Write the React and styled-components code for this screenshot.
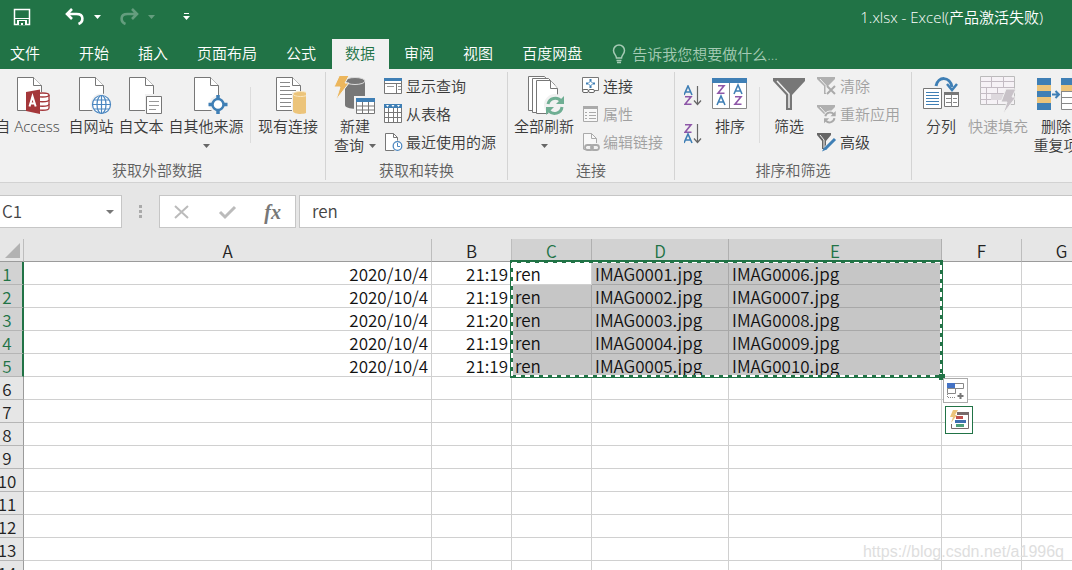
import React from "react";
import styled, { createGlobalStyle, css } from "styled-components";

const GREEN = "#217346";
const UI_FONT = `"Open Sans", "Noto Sans CJK SC", sans-serif`;
const GRID_FONT = `"Noto Sans CJK SC", sans-serif`;

const GlobalStyle = createGlobalStyle`
  * { box-sizing: border-box; }
  body { margin: 0; background: #fff; font-family: ${UI_FONT}; font-size: 15px; font-weight: 350; }
  button, input { font: inherit; color: inherit; margin: 0; padding: 0; border: 0; background: none; border-radius: 0; }
`;

const Window = styled.div`
  display: flex;
  flex-direction: column;
  height: 100vh;
  overflow: hidden;
  background: #fff;
`;

/* ---------- title bar and tabs ---------- */
const TitleBar = styled.header`
  display: flex;
  align-items: center;
  justify-content: space-between;
  height: 38px;
  flex: none;
  padding: 0 29px 4px 13px;
  background: ${GREEN};
  color: #fff;
`;
const QuickAccess = styled.div`
  display: flex;
  align-items: center;
`;
const QuickButton = styled.button`
  display: flex;
  align-items: center;
  height: 20px;
  margin-right: ${(p) => p.$after || 0}px;
  opacity: ${(p) => (p.disabled ? 0.3 : 1)};
`;
const DocTitle = styled.h1`
  margin: 0;
  font-size: 15px;
  font-weight: 350;
  line-height: 20px;
  white-space: nowrap;
`;
const TabBar = styled.nav`
  display: flex;
  align-items: stretch;
  height: 31px;
  flex: none;
  padding-top: 1px;
  background: ${GREEN};
  color: #fff;
`;
const Tab = styled.button`
  flex: none;
  padding: 0 ${(p) => (p.$file ? 24 : 14)}px 3px ${(p) => (p.$file ? 10 : 15)}px;
  line-height: 20px;
  white-space: nowrap;
  ${(p) => p.$active && css`background: #f1f1f1; color: ${GREEN}; margin-left: 2px; padding-left: 13px;`}
`;
const TellMe = styled.label`
  display: flex;
  align-items: center;
  gap: 6px;
  flex: 1;
  margin-left: 16px;
  color: #a6cbb5;
  input { flex: 1; min-width: 0; height: 24px; }
  input::placeholder { color: #a6cbb5; opacity: 1; }
`;

/* ---------- ribbon ---------- */
const Ribbon = styled.section`
  display: flex;
  flex: none;
  height: 114px;
  margin-left: -11px;
  padding-top: 3px;
  background: #f1f1f1;
  border-bottom: 1px solid #d2d2d2;
  color: #3a3a3a;
`;
const Group = styled.div`
  display: flex;
  flex-direction: column;
  flex: none;
  width: ${(p) => p.$w}px;
  height: 108px;
  border-right: 1px solid #d4d4d4;
`;
const GroupBody = styled.div`
  display: flex;
  flex: 1;
  padding-left: ${(p) => p.$start || 0}px;
`;
const GroupLabel = styled.div`
  height: 20px;
  line-height: 20px;
  text-align: center;
  color: #606060;
`;
const BigButton = styled.button`
  display: flex;
  flex-direction: column;
  align-items: center;
  flex: none;
  width: ${(p) => p.$w}px;
  padding-top: 4px;
  line-height: 19px;
  white-space: nowrap;
  color: ${(p) => (p.disabled ? "#a0a0a0" : "#3a3a3a")};
  > svg { flex: none; margin-bottom: 1px; }
`;
const SecondLine = styled.span`
  display: flex;
  align-items: center;
  justify-content: center;
  gap: 5px;
  height: 19px;
`;
const Divider = styled.span`
  flex: none;
  width: 1px;
  height: 56px;
  margin: 15px ${(p) => p.$gap}px 0;
  background: #dcdcdc;
`;
const Stack = styled.div`
  display: flex;
  flex-direction: column;
  padding: 0 0 0 ${(p) => p.$gap || 0}px;
`;
const SmallButton = styled.button`
  display: flex;
  align-items: center;
  gap: 3px;
  height: 28px;
  line-height: 20px;
  white-space: nowrap;
  color: ${(p) => (p.disabled ? "#a0a0a0" : "#3a3a3a")};
`;
const SortStack = styled.div`
  display: flex;
  flex-direction: column;
  gap: 16px;
  padding: 13px 0 0 9px;
`;
const SortButton = styled.button`
  display: block;
  width: 18px;
  height: 22px;
`;

/* ---------- formula bar ---------- */
const FormulaRow = styled.div`
  display: flex;
  flex: none;
  height: 56px;
  padding-top: 12px;
  background: #e6e6e6;
  color: #444;
  font-family: ${GRID_FONT};
  font-size: 17px;
`;
const Box = styled.div`
  display: flex;
  align-items: center;
  height: 33px;
  background: #fff;
  border: 1px solid #c6c6c6;
  input { height: 31px; padding-bottom: 3px; }
`;
const NameBox = styled(Box)`
  width: 122px;
  border-left: 0;
  input { width: 100px; padding-left: 2px; }
`;
const Grip = styled.span`
  width: 37px;
  height: 33px;
  display: flex;
  align-items: center;
  justify-content: center;
`;
const Tools = styled(Box)`
  width: 137px;
  margin-right: 3px;
  justify-content: space-between;
  padding: 0 14px 0 13px;
`;
const FormulaInput = styled(Box)`
  flex: 1;
  border-right: 0;
  input { flex: 1; min-width: 0; padding-left: 12px; }
`;
const IconButton = styled.button`
  display: flex;
`;
const FunctionMark = styled.i`
  font: italic bold 20px/24px "Liberation Serif", serif;
  color: #777;
`;

/* ---------- sheet ---------- */
const SheetArea = styled.main`
  position: relative;
  flex: 1;
  overflow: hidden;
  font-family: ${GRID_FONT};
  font-size: 17px;
  color: #111;
`;
const Sheet = styled.table`
  width: 100%;
  min-width: 1102px;
  table-layout: fixed;
  border-collapse: separate;
  border-spacing: 0;
`;
const HeadCell = styled.th`
  height: 23px;
  padding: 2px 0 0;
  font-weight: 350;
  line-height: 20px;
  background: ${(p) => (p.$on ? "#d2d2d2" : "#e6e6e6")};
  color: ${(p) => (p.$on ? GREEN : "#222")};
  border-right: 1px solid ${(p) => (p.$on ? "#b0b0b0" : "#bdbdbd")};
  border-bottom: 1px solid #9b9b9b;
`;
const Corner = styled(HeadCell)`
  padding: 0 3px 3px 0;
  vertical-align: bottom;
  svg { display: block; margin-left: auto; }
`;
const RowHead = styled.th`
  height: 23px;
  padding: 2px 0 0;
  font-weight: 350;
  line-height: 20px;
  background: ${(p) => (p.$on ? "#d2d2d2" : "#e6e6e6")};
  color: ${(p) => (p.$on ? GREEN : "#222")};
  border-right: ${(p) => (p.$on ? `2px solid ${GREEN}` : "1px solid #9b9b9b")};
  border-bottom: 1px solid #b5b5b5;
  span { display: flex; justify-content: center; width: 14px; }
`;
const Cell = styled.td`
  height: 23px;
  padding: 2px 3px 0 3px;
  line-height: 20px;
  white-space: nowrap;
  text-align: ${(p) => (p.$right ? "right" : "left")};
  background: ${(p) => (p.$sel ? "#c6c6c6" : "#fff")};
  border-right: 1px solid ${(p) => (p.$sel ? "#a8a8a8" : "#d0d0d0")};
  border-bottom: 1px solid ${(p) => (p.$sel ? "#a8a8a8" : "#d0d0d0")};
`;
const Marquee = styled.svg`
  position: absolute;
  left: 510px;
  top: 21px;
  pointer-events: none;
`;
const FloatButton = styled.button`
  position: absolute;
  left: ${(p) => p.$x}px;
  top: ${(p) => p.$y}px;
  width: ${(p) => p.$size}px;
  height: ${(p) => p.$size}px;
  display: flex;
  align-items: center;
  justify-content: center;
  background: #fff;
  border: 1px solid ${(p) => p.$edge};
`;
const Watermark = styled.span`
  position: absolute;
  right: 8px;
  bottom: 8px;
  font: 16px/20px "Liberation Sans", sans-serif;
  color: #dedede;
`;

/* ---------- drawings ---------- */
const Caret = ({ color = "#666" }) => (
  <svg width="7" height="4" viewBox="0 0 7 4"><path d="M0 0h7L3.500 4z" fill={color} /></svg>
);
const Svg = ({ w = 36, h = 40, children }) => (
  <svg width={w} height={h} viewBox={`0 0 ${w} ${h}`} fill="none">{children}</svg>
);
const Page = ({ x = 2 }) => (
  <g stroke="#777" fill="#fff">
    <path d={`M${x + 0.5} 1.5h16l8 8v25h-24z`} />
    <path d={`M${x + 16.5} 1.5v8h8`} />
  </g>
);
const AccessIcon = () => (
  <Svg w={44}>
    <g transform="translate(9 0)">
      <Page x={2} />
      <path d="M20 16h15v21H20z" fill="#f1f1f1" />
      <g stroke="#a4373a" strokeWidth="1.3" fill="#fff">
        <path d="M21 19v13c0 3 13 3 13 0V19" /><ellipse cx="27.500" cy="19" rx="6.500" ry="2" />
        <path d="M21 23.500c0 3 13 3 13 0M21 28c0 3 13 3 13 0" />
      </g>
      <path d="M11 16l14-2.500v24.500L11 35z" fill="#a4373a" />
      <path d="M14.500 30.500l3-10 3.200 10M15.500 27.500h4.200" stroke="#fff" strokeWidth="2" />
    </g>
  </Svg>
);
const WebIcon = () => (
  <Svg w={44}>
    <g transform="translate(5 0)">
      <Page x={5} />
      <circle cx="27.500" cy="28.500" r="11" fill="#f1f1f1" />
      <g stroke="#4a86c0" strokeWidth="1.2" fill="#fff">
        <circle cx="27.500" cy="28.500" r="9" /><ellipse cx="27.500" cy="28.500" rx="4.500" ry="9" />
        <path d="M27.500 19.500v18M18.500 28.500h18M20 24h15M20 33h15" />
      </g>
    </g>
  </Svg>
);
const TextIcon = () => (
  <Svg w={44}>
    <g transform="translate(5 0)">
      <Page x={5} />
      <path d="M21 18h19v20H21z" fill="#f1f1f1" />
      <path d="M22.500 20.500h15v17h-15z" fill="#fff" stroke="#777" />
      <path d="M25 25.500h10M25 29.500h10M25 33.500h7" stroke="#999" />
    </g>
  </Svg>
);
const OtherIcon = () => (
  <Svg w={44}>
    <g transform="translate(3 0)">
      <Page x={7} />
      <circle cx="31" cy="28.500" r="9" fill="#f1f1f1" />
      <circle cx="31" cy="28.500" r="5.500" fill="#fff" stroke="#3f7fb5" strokeWidth="2.500" />
      <path d="M31 19v4M31 34v4M21.500 28.500h4M36.500 28.500h4" stroke="#3f7fb5" strokeWidth="3.500" />
    </g>
  </Svg>
);
const ExistingIcon = () => (
  <Svg>
    <g transform="translate(3 0)">
      <Page x={3} />
      <path d="M7 6.500h10M7 10.500h10M7 14.500h16M7 18.500h13M7 22.500h13M7 26.500h11M7 30.500h11" stroke="#888" />
      <path d="M19 16h17v23H19z" fill="#f1f1f1" />
      <path d="M20 18v17c0 4 15 4 15 0V18" fill="#ecc47a" />
      <ellipse cx="27.500" cy="18" rx="7.500" ry="2.500" fill="#ecc47a" stroke="#fbe7c0" />
    </g>
  </Svg>
);
const NewQueryIcon = () => (
  <Svg w={42}>
    <path d="M11 5v24c0 5 20 5 20 0V5" fill="#777" />
    <ellipse cx="21" cy="5" rx="10" ry="3.500" fill="#777" stroke="#ddd" />
    <path d="M6-2h10l-5 9h4L2 24l4-13H0z" fill="#ecb65c" stroke="#f1f1f1" />
    <path d="M20 20h22v20H20z" fill="#f1f1f1" />
    <path d="M22.500 22.500h18v15h-18z" fill="#fff" stroke="#777" />
    <path d="M22 22h19v4H22z" fill="#3f7fb5" />
    <path d="M22 30h19M22 34h19M28.500 26v12M34.500 26v12" stroke="#777" />
  </Svg>
);
const ShowQueryIcon = () => (
  <Svg w={19} h={18}>
    <path d="M.500 1.500h17v15H.500z" fill="#fff" stroke="#777" />
    <path d="M0 1h18v3H0z" fill="#3f7fb5" />
    <path d="M0 6.500h18M12.500 6v10" stroke="#777" /><path d="M14 9.500h3M14 12.500h3M3 9.500h7" stroke="#999" />
  </Svg>
);
const TableIcon = () => (
  <Svg w={19} h={20}>
    <path d="M.500 1.500h17v17H.500z" fill="#fff" stroke="#777" />
    <path d="M0 0h18v4H0z" fill="#3f7fb5" />
    <path d="M2 1h3L3.500 3zM7.500 1h3L9 3zM13 1h3l-1.500 2z" fill="#fff" />
    <path d="M0 8.500h18M0 13.500h18M4.500 4v15M9.500 4v15M13.500 4v15" stroke="#777" />
  </Svg>
);
const RecentIcon = () => (
  <Svg w={19} h={20}>
    <path d="M1.500 1.500h8l4 4v13h-12z" fill="#fff" stroke="#777" /><path d="M9.500 1.500v4h4" stroke="#777" />
    <circle cx="13.500" cy="14" r="5.500" fill="#f1f1f1" />
    <circle cx="13.500" cy="14" r="4.300" fill="#fff" stroke="#4a86c0" strokeWidth="1.200" /><path d="M13.500 11v3.500h2.500" stroke="#4a86c0" />
  </Svg>
);
const RefreshArrows = ({ color, s = 1, x = 0, y = 0 }) => (
  <g transform={`translate(${x} ${y}) scale(${s})`} stroke={color} strokeWidth="3">
    <path d="M2 8a7.500 7.500 0 0 1 13-3M16 11a7.500 7.500 0 0 1-13 4" />
    <path d="M18 0v8h-8zM0 19v-8h8z" fill={color} stroke="none" />
  </g>
);
const RefreshAllIcon = () => (
  <Svg w={42}>
    <g stroke="#777" fill="#fff">
      <path d="M5.500.500h16l5 6v28h-21z" /><path d="M9.500 2.500h16l6 6v28h-22z" />
      <path d="M13.500 4.500h14l7 8v25h-21z" /><path d="M27.500 4.500v8h7" />
    </g>
    <circle cx="32" cy="29" r="11" fill="#f1f1f1" />
    <RefreshArrows color="#6fae93" x={23} y={20} />
  </Svg>
);
const ConnectIcon = () => (
  <Svg w={19} h={20}>
    <path d="M1.500 1.500h16v13h-16z" fill="#fff" stroke="#777" />
    <path d="M9.500 3v2M9.500 10v2M5 7.500h2M12 7.500h2" stroke="#3f7fb5" strokeWidth="2" /><path d="M9.500 5l2.500 2.500L9.500 10 7 7.500z" stroke="#3f7fb5" />
    <rect x="1.500" y="13.500" width="6" height="3" rx="1.500" fill="#fff" stroke="#666" /><rect x="7.500" y="13.500" width="6" height="3" rx="1.500" fill="#fff" stroke="#666" />
  </Svg>
);
const PropsIcon = () => (
  <Svg w={19} h={20}>
    <path d="M2.500 2.500h14v15h-14z" fill="#f8f8f8" stroke="#aaa" /><path d="M2 2h15v3H2z" fill="#aaa" />
    <path d="M4 8.500h2M4 11.500h2M4 14.500h2M8 8.500h7M8 11.500h7M8 14.500h7" stroke="#aaa" />
  </Svg>
);
const EditLinkIcon = () => (
  <Svg w={19} h={20}>
    <path d="M2.500 17V1.500h8l5 5V11" fill="#f8f8f8" stroke="#aaa" /><path d="M10.500 1.500v5h5M2.500 17.500h2" stroke="#aaa" />
    <g stroke="#aaa" strokeWidth="1.800"><rect x="4" y="13" width="8" height="5" rx="2.500" /><rect x="10" y="13" width="8" height="5" rx="2.500" /></g>
  </Svg>
);
const LetterA = ({ x, y }) => <path d={`M${x} ${y + 9}l4-9 4 9M${x + 1.5} ${y + 6}h5`} stroke="#3f7fb5" strokeWidth="1.600" />;
const LetterZ = ({ x, y }) => <path d={`M${x + 1} ${y + 0.8}h6L${x + 1} ${y + 8.2}h6.500`} stroke="#8e57a8" strokeWidth="1.600" />;
const SortIcon = ({ desc }) => (
  <Svg w={18} h={22}>
    {desc ? <><LetterZ x={0} y={1} /><LetterA x={0} y={11} /></> : <><LetterA x={0} y={1} /><LetterZ x={0} y={11} /></>}
    <path d="M13.500 1v18M10 15.500l3.500 4 3.500-4" stroke="#666" strokeWidth="1.200" />
  </Svg>
);
const SortDialogIcon = () => (
  <Svg>
    <path d="M.500 3.500h34v29H.500z" fill="#fff" stroke="#888" /><path d="M0 2h35v5H0z" fill="#3f7fb5" /><path d="M17.500 7v26" stroke="#888" />
    <LetterZ x={5} y={9} /><LetterA x={5} y={20} /><LetterA x={22} y={9} /><LetterZ x={22} y={20} />
  </Svg>
);
const FilterIcon = () => (
  <Svg>
    <path d="M2 2h32v3L21 19v15h-6V19L2 5z" fill="#777" /><path d="M6 5l12 13v14" stroke="#f1f1f1" strokeWidth="1.500" />
  </Svg>
);
const SmallFunnel = ({ color }) => (
  <><path d="M0 1h18v2l-7 7v8H7v-8L0 3z" fill={color} /><path d="M3 3l6 6.500V17" stroke="#f1f1f1" /></>
);
const ClearIcon = () => (
  <Svg w={20} h={20}><SmallFunnel color="#b0b0b0" /><path d="M9 10h10v9H9z" fill="#f1f1f1" /><path d="M10 10l8 8M18 10l-8 8" stroke="#aaa" strokeWidth="2" /></Svg>
);
const ReapplyIcon = () => (
  <Svg w={20} h={20}><SmallFunnel color="#b0b0b0" /><circle cx="13" cy="13" r="6.500" fill="#f1f1f1" /><RefreshArrows color="#aaa" s={0.65} x={7} y={7} /></Svg>
);
const AdvancedIcon = () => (
  <Svg w={20} h={20}><path d="M0 1h14v2l-5 6v8H5V9L0 3z" fill="#666" /><path d="M3 3l4 5v8" stroke="#f1f1f1" /><path d="M6 19l2-5 9-8 3 3-9 9z" fill="#f1f1f1" /><path d="M8 17L18 7" stroke="#3f7fb5" strokeWidth="3" /><path d="M5 19.500l2-4 2.500 2z" fill="#3f7fb5" /></Svg>
);
const SplitIcon = () => (
  <Svg w={38}>
    <path d="M14 10C16 0 28 0 30 11" stroke="#3f7fb5" strokeWidth="3" /><path d="M25 8l5 6 5-6" stroke="#3f7fb5" strokeWidth="2.500" />
    <path d="M1.500 12.500h18v20h-18z" fill="#fff" stroke="#777" /><path d="M4 16.500h13M4 19.500h13M4 22.500h13M4 25.500h13M4 28.500h13" stroke="#3f7fb5" />
    <path d="M22.500 16.500h14v14h-14z" fill="#fff" stroke="#777" /><path d="M22 16h15v3H22z" fill="#777" /><path d="M24 22.500h5M31 22.500h4M24 26.500h5M31 26.500h4M29.500 19v12" stroke="#888" />
  </Svg>
);
const FlashFillIcon = () => (
  <Svg w={38}>
    <path d="M1.500.500h34v28h-34z" fill="#f6f2f6" stroke="#bbb" /><path d="M1 5.500h34M1 11.500h34M1 17.500h34M1 23.500h34M12.500 0v12M24.500 0v12M7.500 12v17M18.500 12v17" stroke="#c4bcc4" />
    <path d="M12 18h14v6H12z" fill="#ddd8dd" />
    <path d="M27 13h10l-4 8h4L24 38l4-12h-6z" fill="#c8c2c8" stroke="#f1f1f1" />
  </Svg>
);
const DedupeIcon = () => (
  <Svg w={38}>
    {[0, 24].map((x) => (
      <g key={x}>
        <path d={`M${x + 0.5} 2.500h13v31h-13z`} fill="#fff" stroke="#888" />
        <path d={`M${x} 2h14v7h-14z`} fill="#3f7fb5" /><path d={`M${x} 9h14v6h-14z`} fill="#ecc47a" />
      </g>
    ))}
    <path d="M0 15h14v6H0zM0 27h14v7H0z" fill="#3f7fb5" /><path d="M0 21h14v6H0z" fill="#ecc47a" />
    <path d="M24 15.500h14M24 21.500h14M24 27.500h14" stroke="#888" />
    <path d="M15 18.500h6M18.500 15l3.500 3.500-3.500 3.500" stroke="#3f7fb5" strokeWidth="2" />
  </Svg>
);
const UndoPath = () => <path d="M7 2L2 7l5 5M2.500 7h9c8 0 7 8 2 10" stroke="currentColor" strokeWidth="2.600" />;

/* ---------- data ---------- */
const TABS = ["文件", "开始", "插入", "页面布局", "公式", "数据", "审阅", "视图", "百度网盘"];
const TIMES = ["21:19", "21:19", "21:20", "21:19", "21:19"];
const COLUMNS = [["A", 408], ["B", 80], ["C", 80], ["D", 137], ["E", 213], ["F", 80], ["G", null]];
const pad = (n) => String(n).padStart(4, "0");
const ROWS = Array.from({ length: 14 }, (_, i) =>
  i < 5 ? ["2020/10/4", TIMES[i], "ren", `IMAG${pad(i + 1)}.jpg`, `IMAG${pad(i + 6)}.jpg`, "", ""] : Array(7).fill("")
);
const isSelectedCol = (c) => c >= 2 && c <= 4;

export default function App() {
  return (
    <Window>
      <GlobalStyle />
      <TitleBar>
        <QuickAccess>
          <QuickButton $after={34} aria-label="保存">
            <svg width="18" height="18" viewBox="0 0 18 18"><path d="M1.500 1.500h15v15h-15z" fill="none" stroke="#fff" strokeWidth="1.500" /><path d="M2 10h14v1H2zM4 12h10v5H4z" fill="#fff" /><path d="M6 13h6v4h-2v-2H8v2H6z" fill={GREEN} /></svg>
          </QuickButton>
          <QuickButton $after={9} aria-label="撤消"><svg width="20" height="20" viewBox="0 0 20 20" fill="none"><UndoPath /></svg></QuickButton>
          <QuickButton $after={18} aria-label="撤消选项"><Caret color="#fff" /></QuickButton>
          <QuickButton $after={9} disabled aria-label="恢复"><svg width="20" height="20" viewBox="0 0 20 20" fill="none"><g transform="matrix(-1 0 0 1 20 0)"><UndoPath /></g></svg></QuickButton>
          <QuickButton $after={28} disabled aria-label="恢复选项"><Caret color="#fff" /></QuickButton>
          <QuickButton aria-label="自定义快速访问工具栏"><svg width="7" height="8" viewBox="0 0 7 8" fill="#fff"><path d="M1 0h5v1H1zM0 3h7L3.500 7z" /></svg></QuickButton>
        </QuickAccess>
        <DocTitle>1.xlsx - Excel(产品激活失败)</DocTitle>
      </TitleBar>

      <TabBar>
        {TABS.map((t, i) => <Tab key={t} $file={i === 0} $active={t === "数据"}>{t}</Tab>)}
        <TellMe>
          <svg width="14" height="20" viewBox="0 0 14 20" fill="none" stroke="currentColor" strokeWidth="1.500"><path d="M4.500 14c0-3-3-4-3-7.500a5.500 5.500 0 0 1 11 0c0 3.500-3 4.500-3 7.500zM4.500 16.500h5M5 18.500h4" /></svg>
          <input aria-label="告诉我您想要做什么" placeholder="告诉我您想要做什么..." />
        </TellMe>
      </TabBar>

      <Ribbon>
        <Group $w={337}>
          <GroupBody>
            <BigButton $w={77}><AccessIcon />自 Access</BigButton>
            <BigButton $w={50}><WebIcon />自网站</BigButton>
            <BigButton $w={50}><TextIcon />自文本</BigButton>
            <BigButton $w={80}><OtherIcon />自其他来源<SecondLine><Caret /></SecondLine></BigButton>
            <Divider $gap={4} />
            <BigButton $w={66}><ExistingIcon />现有连接</BigButton>
          </GroupBody>
          <GroupLabel>获取外部数据</GroupLabel>
        </Group>
        <Group $w={182}>
          <GroupBody $start={4}>
            <BigButton $w={50}><NewQueryIcon />新建<SecondLine>查询<Caret /></SecondLine></BigButton>
            <Stack $gap={4}>
              <SmallButton><ShowQueryIcon />显示查询</SmallButton>
              <SmallButton><TableIcon />从表格</SmallButton>
              <SmallButton><RecentIcon />最近使用的源</SmallButton>
            </Stack>
          </GroupBody>
          <GroupLabel>获取和转换</GroupLabel>
        </Group>
        <Group $w={167}>
          <GroupBody $start={4}>
            <BigButton $w={64}><RefreshAllIcon />全部刷新<SecondLine><Caret /></SecondLine></BigButton>
            <Stack $gap={5}>
              <SmallButton><ConnectIcon />连接</SmallButton>
              <SmallButton disabled><PropsIcon />属性</SmallButton>
              <SmallButton disabled><EditLinkIcon />编辑链接</SmallButton>
            </Stack>
          </GroupBody>
          <GroupLabel>连接</GroupLabel>
        </Group>
        <Group $w={237}>
          <GroupBody>
            <SortStack>
              <SortButton aria-label="升序"><SortIcon /></SortButton>
              <SortButton aria-label="降序"><SortIcon desc /></SortButton>
            </SortStack>
            <BigButton $w={56}><SortDialogIcon />排序</BigButton>
            <Divider $gap={1} />
            <BigButton $w={56}><FilterIcon />筛选</BigButton>
            <Stack>
              <SmallButton disabled><ClearIcon />清除</SmallButton>
              <SmallButton disabled><ReapplyIcon />重新应用</SmallButton>
              <SmallButton><AdvancedIcon />高级</SmallButton>
            </Stack>
          </GroupBody>
          <GroupLabel>排序和筛选</GroupLabel>
        </Group>
        <Group $w={320}>
          <GroupBody $start={3}>
            <BigButton $w={52}><SplitIcon />分列</BigButton>
            <BigButton $w={62} disabled><FlashFillIcon />快速填充</BigButton>
            <BigButton $w={54}><DedupeIcon />删除<SecondLine>重复项</SecondLine></BigButton>
          </GroupBody>
        </Group>
      </Ribbon>

      <FormulaRow>
        <NameBox>
          <input aria-label="名称框" defaultValue="C1" />
          <IconButton aria-label="名称列表"><svg width="18" height="8" viewBox="0 0 18 8"><path d="M6 2h8l-4 4z" fill="#777" /></svg></IconButton>
        </NameBox>
        <Grip><svg width="4" height="14" viewBox="0 0 4 14" fill="#aaa"><path d="M0 0h3v3H0zM0 5h3v3H0zM0 10h3v3H0z" /></svg></Grip>
        <Tools>
          <IconButton aria-label="取消"><svg width="17" height="16" viewBox="0 0 17 16"><path d="M2 2l13 12M15 2L2 14" stroke="#bbb" strokeWidth="2" /></svg></IconButton>
          <IconButton aria-label="输入"><svg width="19" height="16" viewBox="0 0 19 16"><path d="M2 8l5 5L17 3" stroke="#bbb" strokeWidth="3" fill="none" /></svg></IconButton>
          <IconButton aria-label="插入函数"><FunctionMark>fx</FunctionMark></IconButton>
        </Tools>
        <FormulaInput><input aria-label="编辑栏" defaultValue="ren" /></FormulaInput>
      </FormulaRow>

      <SheetArea>
        <Sheet>
          <colgroup>
            <col width="24" />
            {COLUMNS.map(([n, w]) => <col key={n} width={w || undefined} />)}
          </colgroup>
          <thead>
            <tr>
              <Corner aria-label="全选"><svg width="15" height="15" viewBox="0 0 15 15"><path d="M15 0v15H0z" fill="#b2b2b2" /></svg></Corner>
              {COLUMNS.map(([n], c) => <HeadCell key={n} scope="col" $on={isSelectedCol(c)}>{n}</HeadCell>)}
            </tr>
          </thead>
          <tbody>
            {ROWS.map((row, r) => (
              <tr key={r}>
                <RowHead scope="row" $on={r < 5}><span>{r + 1}</span></RowHead>
                {row.map((v, c) => (
                  <Cell key={c} $right={c < 2} $sel={r < 5 && isSelectedCol(c) && !(r === 0 && c === 2)}>{v}</Cell>
                ))}
              </tr>
            ))}
          </tbody>
        </Sheet>
        <Marquee width="436" height="120" viewBox="0 0 436 120" fill="none">
          <path d="M1.500 1.500h430v115h-430z" stroke={GREEN} strokeWidth="3" />
          <path d="M2 2h429v114h-429z" stroke="#fff" strokeWidth="2" strokeDasharray="5 4" />
          <path d="M0 .500h433" stroke={GREEN} strokeWidth="3" />
          <path d="M429 114h6v6h-6z" fill={GREEN} />
        </Marquee>
        <FloatButton $x={943} $y={139} $size={25} $edge="#ababab" aria-label="自动填充选项">
          <svg width="19" height="19" viewBox="0 0 19 19" fill="none"><path d="M1.500 2.500h16v5h-16zM1.500 7.500h8v5h-8z" stroke="#888" /><path d="M1 2h8v5H1z" fill="#4472c4" /><path d="M1.500 13v4M2 16.500h8" stroke="#888" strokeDasharray="1 1" /><path d="M14.500 12v6M11.500 15h6" stroke="#777" strokeWidth="2" /></svg>
        </FloatButton>
        <FloatButton $x={945} $y={167} $size={28} $edge={GREEN} aria-label="快速分析">
          <svg width="22" height="22" viewBox="0 0 22 22" fill="none"><path d="M3.500 15v4.500h17v-16" stroke="#776a6a" /><path d="M9 3h12v3H9z" fill="#776a6a" /><path d="M8 7h7v3H8z" fill="#c0504d" /><path d="M7 11h11v3H7z" fill="#3f6fb0" /><path d="M8 15h8v3H8z" fill="#4f9f7a" /><path d="M5 1h5L7 6h2l-6 8 2-6H2z" fill="#ecc47a" /></svg>
        </FloatButton>
        <Watermark>https://blog.csdn.net/a1996q</Watermark>
      </SheetArea>
    </Window>
  );
}
